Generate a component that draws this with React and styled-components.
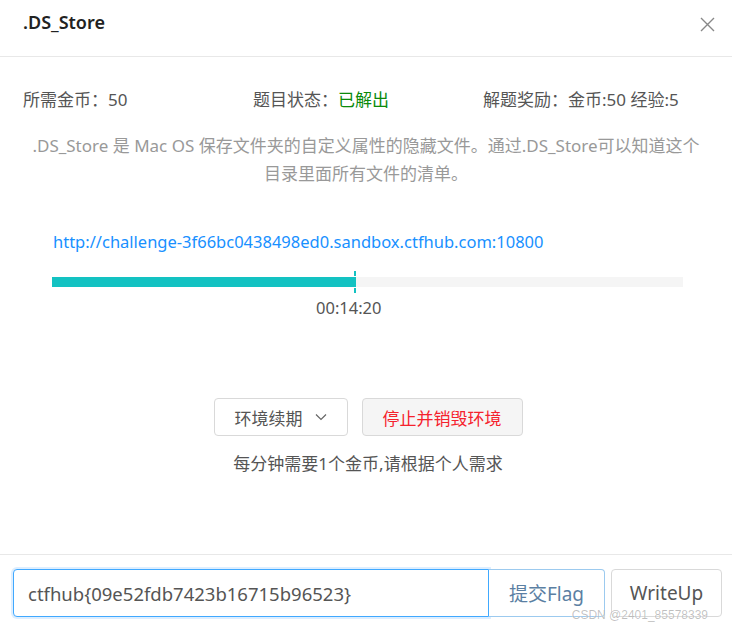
import React from 'react';
import styled, { createGlobalStyle } from 'styled-components';

const GlobalStyle = createGlobalStyle`
  html, body {
    margin: 0;
    padding: 0;
    background: #fff;
  }
  body {
    font-family: "Noto Sans", "Noto Sans CJK SC", sans-serif;
    color: #555;
  }
  * {
    box-sizing: border-box;
  }
`;

const Modal = styled.div`
  position: relative;
  width: 732px;
  height: 629px;
  background: #fff;
  display: flex;
  flex-direction: column;
  overflow: hidden;
`;

const Header = styled.div`
  height: 57px;
  border-bottom: 1px solid #e8e8e8;
  display: flex;
  align-items: flex-start;
  justify-content: space-between;
  padding: 9px 16px 0 23px;
  flex-shrink: 0;
`;

const Title = styled.h3`
  margin: 0;
  font-size: 18px;
  line-height: 26px;
  font-weight: 600;
  color: #222;
`;

const Close = styled.button`
  border: 0;
  background: none;
  padding: 0;
  margin-top: 6px;
  width: 18px;
  height: 18px;
  display: flex;
  align-items: center;
  justify-content: center;
  cursor: pointer;
`;

const Body = styled.div`
  flex: 1;
  padding: 29px 23px 0;
`;

const InfoRow = styled.div`
  display: grid;
  grid-template-columns: 230px 230px 1fr;
  font-size: 17px;
  line-height: 28px;
  color: #555;
`;

const Solved = styled.span`
  color: #0a8a0a;
`;

const Desc = styled.p`
  margin: 18px -6px 0;
  text-align: center;
  font-size: 17px;
  line-height: 28px;
  color: #999;
`;

const Url = styled.a`
  display: block;
  margin: 41px 0 0 30px;
  font-size: 16.5px;
  line-height: 26px;
  color: #1890ff;
  text-decoration: none;
`;

const Track = styled.div`
  position: relative;
  margin: 22px 26px 0 29px;
  height: 10px;
  background: #f5f5f5;
`;

const Fill = styled.div`
  height: 100%;
  background: #13c2c2;
`;

const Marker = styled.div`
  position: absolute;
  top: -6px;
  width: 2px;
  height: 22px;
  margin-left: -1px;
  background: linear-gradient(
    #13c2c2 0 5px,
    transparent 5px 6px,
    #13c2c2 6px 16px,
    transparent 16px 17px,
    #13c2c2 17px
  );
`;

const Time = styled.div`
  margin-top: 10px;
  font-size: 16.5px;
  line-height: 22px;
  color: #555;
`;

const Actions = styled.div`
  margin-top: 79px;
  display: flex;
  justify-content: center;
  gap: 14px;
  padding-left: 4px;
`;

const Button = styled.button`
  height: 38px;
  padding: 0 20px;
  border: 1px solid #d9d9d9;
  border-radius: 4px;
  background: ${p => (p.danger ? '#f5f5f5' : '#fff')};
  color: ${p => (p.danger ? '#f5222d' : '#555')};
  font-family: inherit;
  font-size: 17px;
  display: flex;
  align-items: center;
  gap: 12px;
  cursor: pointer;
`;

const Note = styled.div`
  margin-top: 14px;
  text-align: center;
  font-size: 17px;
  line-height: 28px;
  color: #555;
  padding-left: 4px;
`;

const Footer = styled.div`
  border-top: 1px solid #e8e8e8;
  height: 75px;
  padding: 14px 10px 0 13px;
  display: flex;
  align-items: flex-start;
  flex-shrink: 0;
`;

const InputGroup = styled.div`
  display: flex;
`;

const FlagInput = styled.input`
  width: 476px;
  height: 48px;
  padding: 0 14px;
  border: 1px solid #40a9ff;
  border-radius: 4px 0 0 4px;
  box-shadow: 0 0 0 2px rgba(24, 144, 255, 0.15);
  outline: none;
  font-family: inherit;
  font-size: 18.5px;
  color: #555;
  caret-color: #222;
`;

const Submit = styled.button`
  width: 116px;
  height: 48px;
  border: 1px solid #9ccaef;
  border-left: 0;
  border-radius: 0 4px 4px 0;
  background: #fff;
  color: #5b7fa3;
  font-family: inherit;
  font-size: 19px;
  cursor: pointer;
`;

const WriteUp = styled.button`
  margin-left: 6px;
  width: 112px;
  height: 48px;
  border: 1px solid #d9d9d9;
  border-radius: 4px;
  background: #fff;
  color: #555;
  font-family: inherit;
  font-size: 19px;
  cursor: pointer;
`;

const Watermark = styled.div`
  position: absolute;
  right: 24px;
  bottom: 7px;
  font-family: "Liberation Sans", sans-serif;
  font-size: 12px;
  color: rgba(0, 0, 0, 0.25);
  text-shadow: 0 0 1px #fff;
  pointer-events: none;
`;

const progress = 303 / 631;

const App = () => {
  return (
    <Modal>
      <GlobalStyle />
      <Header>
        <Title>.DS_Store</Title>
        <Close aria-label="close">
          <svg width="15" height="15" viewBox="0 0 15 15">
            <path d="M1 1L14 14M14 1L1 14" stroke="#888" strokeWidth="1.4" fill="none" />
          </svg>
        </Close>
      </Header>

      <Body>
        <InfoRow>
          <span>所需金币：50</span>
          <span>题目状态：<Solved>已解出</Solved></span>
          <span>解题奖励：金币:50 经验:5</span>
        </InfoRow>

        <Desc>
          .DS_Store 是 Mac OS 保存文件夹的自定义属性的隐藏文件。通过.DS_Store可以知道这个
          <br />
          目录里面所有文件的清单。
        </Desc>

        <Url href="#">http://challenge-3f66bc0438498ed0.sandbox.ctfhub.com:10800</Url>

        <Track>
          <Fill style={{ width: `${progress * 100}%` }} />
          <Marker style={{ left: `${progress * 100}%` }} />
        </Track>
        <Time style={{ paddingLeft: `${29 + progress * 631 - 39}px` }}>00:14:20</Time>

        <Actions>
          <Button>
            环境续期
            <svg width="12" height="8" viewBox="0 0 12 8">
              <path d="M1 1.5L6 6.5L11 1.5" stroke="#666" strokeWidth="1.2" fill="none" />
            </svg>
          </Button>
          <Button danger>停止并销毁环境</Button>
        </Actions>
        <Note>每分钟需要1个金币,请根据个人需求</Note>
      </Body>

      <Footer>
        <InputGroup>
          <FlagInput defaultValue="ctfhub{09e52fdb7423b16715b96523}" />
          <Submit>提交Flag</Submit>
        </InputGroup>
        <WriteUp>WriteUp</WriteUp>
      </Footer>

      <Watermark>CSDN @2401_85578339</Watermark>
    </Modal>
  );
};

export default App;
